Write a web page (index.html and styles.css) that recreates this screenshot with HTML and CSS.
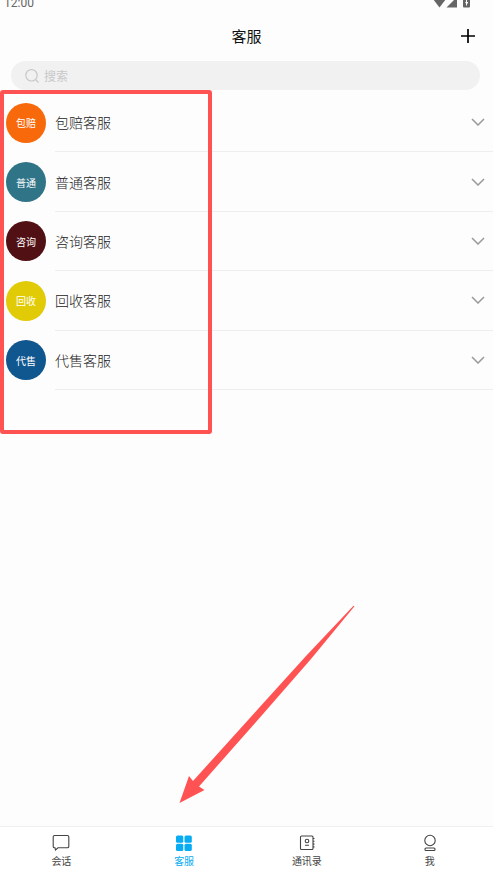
FILE: index.html
```html
<!DOCTYPE html>
<html lang="zh-CN">

<head>
  <meta charset="UTF-8">
  <meta name="viewport" content="width=device-width, initial-scale=1.0">
  <title>客服</title>
  <link rel="stylesheet" href="styles.css">
</head>

<body>

  <div class="status-bar">
    <span class="status-time">12:00</span>
    <svg class="status-icons" width="38" height="12" viewBox="0 0 38 12" fill="#666">
      <path d="M0 2 Q6.500 -2 13 2 L6.500 10.500 Z" />
      <path d="M24 0 V10.500 H13.500 Z" />
      <path fill-rule="evenodd" d="M30 0 H37 V9.500 Q37 10.500 36 10.500 H31 Q30 10.500 30 9.500 Z M33 2 V5 H32 L33 6.500 V8.500 H34 V6.500 H35 V5 H34 V2 Z" />
    </svg>
  </div>

  <header class="header">
    <h1 class="title">客服</h1>
    <button class="add-btn" aria-label="添加">
      <svg width="14" height="14" viewBox="0 0 14 14" fill="none" stroke="#000" stroke-width="1.700">
        <path d="M7 0 V14 M0 7 H14" />
      </svg>
    </button>
  </header>

  <label class="search">
    <svg width="14" height="14" viewBox="0 0 14 14" fill="none" stroke="#c8c8c8" stroke-width="1.200">
      <circle cx="6.500" cy="6.300" r="5.700" />
      <path d="M10.500 10.500 L13.500 13.500" />
    </svg>
    <input type="text" class="search-input" placeholder="搜索" aria-label="搜索">
  </label>

  <main class="content">
    <ul class="list">
      <li class="row">
        <span class="avatar orange">包赔</span>
        <button class="row-btn">包赔客服
          <svg class="chevron" viewBox="0 0 14 8"><path d="M1 1 L7 7 L13 1" /></svg>
        </button>
      </li>
      <li class="row">
        <span class="avatar teal">普通</span>
        <button class="row-btn">普通客服
          <svg class="chevron" viewBox="0 0 14 8"><path d="M1 1 L7 7 L13 1" /></svg>
        </button>
      </li>
      <li class="row">
        <span class="avatar maroon">咨询</span>
        <button class="row-btn">咨询客服
          <svg class="chevron" viewBox="0 0 14 8"><path d="M1 1 L7 7 L13 1" /></svg>
        </button>
      </li>
      <li class="row">
        <span class="avatar yellow">回收</span>
        <button class="row-btn">回收客服
          <svg class="chevron" viewBox="0 0 14 8"><path d="M1 1 L7 7 L13 1" /></svg>
        </button>
      </li>
      <li class="row">
        <span class="avatar blue">代售</span>
        <button class="row-btn">代售客服
          <svg class="chevron" viewBox="0 0 14 8"><path d="M1 1 L7 7 L13 1" /></svg>
        </button>
      </li>
    </ul>

    <!-- Guide marks over the list -->
    <div class="highlight"></div>
    <svg class="arrow" width="176" height="200" viewBox="0 0 176 200">
      <path d="M175.500 1.300 L174.500 0.800 L127 51 L79 104 L14 176 L10 171 L0.500 198 L25.500 185 L20 181.500 L84 109 L132 54 Z" />
    </svg>
  </main>

  <nav class="tab-bar">
    <a href="#" class="tab">
      <svg width="18" height="18" viewBox="0 0 18 18">
        <path d="M2.500 1.500 H15.500 Q16.800 1.500 16.800 2.800 V12.500 Q16.800 13.800 15.500 13.800 H6 L3.500 16 L3 13.800 H2.500 Q1.200 13.800 1.200 12.500 V2.800 Q1.200 1.500 2.500 1.500 Z" />
      </svg>
      会话
    </a>
    <a href="#" class="tab active">
      <svg width="18" height="18" viewBox="0 0 18 18">
        <rect x="1" y="1.500" width="7.300" height="7.300" rx="1.500" />
        <rect x="9.500" y="1.500" width="7.300" height="7.300" rx="1.500" />
        <rect x="1" y="9.800" width="7.300" height="7.300" rx="1.500" />
        <rect x="9.500" y="9.800" width="7.300" height="7.300" rx="1.500" />
      </svg>
      客服
    </a>
    <a href="#" class="tab">
      <svg width="18" height="18" viewBox="0 0 18 18">
        <rect x="2.500" y="2" width="12.500" height="13.500" rx="1" />
        <circle cx="9" cy="7" r="1.800" />
        <path d="M7 11.200 H11 M15 4.500 H16.500 M15 7.300 H16.500 M15 10.100 H16.500 M15 12.900 H16.500" />
      </svg>
      通讯录
    </a>
    <a href="#" class="tab">
      <svg width="18" height="18" viewBox="0 0 18 18">
        <circle cx="9" cy="6.500" r="5.200" />
        <rect x="4" y="14" width="10" height="2.500" rx="1" />
      </svg>
      我
    </a>
  </nav>

</body>

</html>
```

FILE: styles.css
```css
* {
  margin: 0;
  padding: 0;
  box-sizing: border-box;
}

body {
  min-height: 100vh;
  display: flex;
  flex-direction: column;
  background-color: #fdfdfd;
  color: #222;
  font-family: "Noto Sans CJK SC", sans-serif;
}

button,
input {
  border: none;
  outline: none;
  background: none;
  color: inherit;
  font: inherit;
}

button {
  cursor: pointer;
}

.status-bar {
  height: 12px;
  display: flex;
  justify-content: space-between;
  align-items: flex-end;
  padding: 0 22px 3px 4px;
  color: #666;
  font-family: Roboto, sans-serif;
  font-size: 12px;
  line-height: 12px;
}

.status-icons {
  display: block;
}

/* Header */
.header {
  height: 47px;
  display: grid;
  grid-template-columns: 1fr auto 1fr;
  align-items: center;
  padding: 0 18px;
}

.title {
  grid-column: 2;
  color: #111;
  font-size: 15px;
  font-weight: 400;
}

.add-btn {
  justify-self: end;
}

.add-btn svg {
  display: block;
}

.search {
  height: 29px;
  display: flex;
  align-items: center;
  gap: 5px;
  margin: 2px 13px 0 11px;
  padding: 0 14px;
  border-radius: 15px;
  background-color: #f1f1f1;
}

.search-input {
  flex: 1;
  font-size: 12px;
}

.search-input::placeholder {
  color: #c8c8c8;
}

/* List */
.content {
  flex: 1;
  position: relative;
  padding-top: 3px;
}

.list {
  min-height: 297px;
  display: grid;
  grid-auto-rows: 1fr;
  list-style: none;
}

.row {
  display: flex;
  align-items: center;
  gap: 9px;
  padding-left: 6px;
}

.avatar {
  width: 40px;
  height: 40px;
  display: flex;
  justify-content: center;
  align-items: center;
  border-radius: 50%;
  color: #fff;
  font-size: 10px;
}

.orange {
  background-color: #f8690c;
}

.teal {
  background-color: #307487;
}

.maroon {
  background-color: #501014;
}

.yellow {
  background-color: #e1cb06;
}

.blue {
  background-color: #10568f;
}

.row-btn {
  flex: 1;
  align-self: stretch;
  display: flex;
  justify-content: space-between;
  align-items: center;
  padding-right: 8px;
  border-bottom: 1px solid #eee;
  font-size: 14px;
  font-weight: 300;
}

.chevron {
  width: 14px;
  height: 8px;
  fill: none;
  stroke: #999;
  stroke-width: 1.5;
}

.highlight {
  position: absolute;
  top: 0;
  left: 0;
  width: 212px;
  height: 344px;
  border: 4px solid #ff5252;
  border-radius: 3px;
}

.arrow {
  position: absolute;
  left: 179px;
  bottom: 21px;
  fill: #ff5252;
}

/* Bottom tabs */
.tab-bar {
  height: 45px;
  display: grid;
  grid-template-columns: repeat(4, 1fr);
  padding: 7px 2px 0 0;
  border-top: 1px solid #f0f0f0;
  background-color: #fff;
}

.tab {
  display: flex;
  flex-direction: column;
  align-items: center;
  gap: 2px;
  font-size: 10px;
  line-height: 14px;
  color: #444;
  text-decoration: none;
}

.tab svg {
  fill: none;
  stroke: #444;
  stroke-width: 1.1;
}

.tab.active {
  color: #08acf3;
}

.tab.active svg {
  fill: #08acf3;
  stroke: none;
}
```
